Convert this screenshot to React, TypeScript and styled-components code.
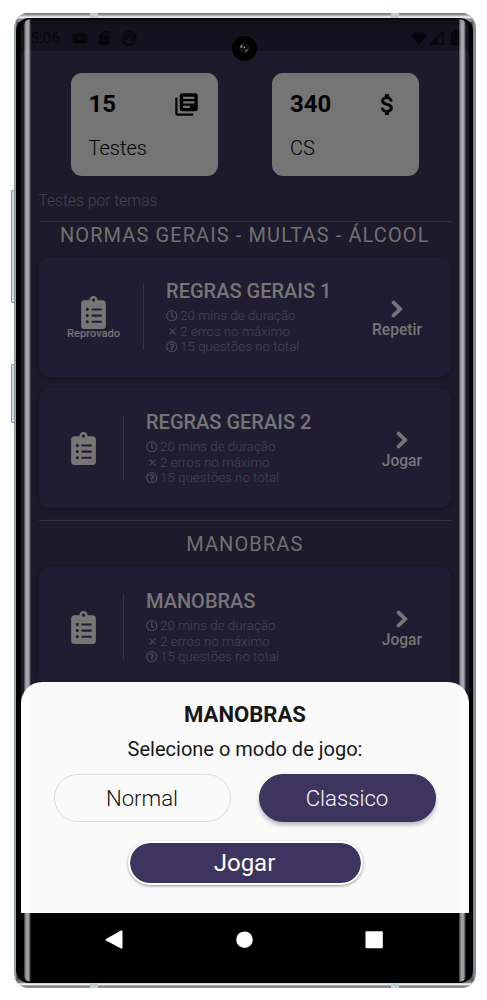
import React from "react";
import styled, { createGlobalStyle } from "styled-components";
import { FaClipboardList, FaRegClock, FaRegQuestionCircle, FaYoutube } from "react-icons/fa";
import { MdAttachMoney, MdClose, MdLibraryBooks, MdSdCard } from "react-icons/md";

const Global = createGlobalStyle`
  * { box-sizing: border-box; }
  body { margin: 0; background: #fff; font-family: Roboto, sans-serif; }
  svg { display: block; flex: none; }
`;

const Page = styled.main`
  width: 487px;
  height: 1000px;
  padding: 13px 0 0 14px;
  overflow: hidden;
`;

const Phone = styled.div`
  position: relative;
  width: 462px;
  height: 975px;
  padding: 6px 7px;
`;

const Frame = styled.div`
  position: absolute;
  inset: 0;
  border-radius: 15px;
  overflow: hidden;
  background: linear-gradient(90deg, #70777b 0, #a9b3b8 1px, #8e989d 2px, #3b4245 3px, #3b4245 458px, #6c717a 459px, #858a94 460px, #858a94 462px);
`;

const Metal = styled.div<{ $bottom?: boolean }>`
  position: absolute;
  left: 0;
  right: 0;
  ${(p) => (p.$bottom ? "bottom: 0" : "top: 0")};
  height: 9px;
  background: ${(p) =>
    p.$bottom
      ? "linear-gradient(#55565a, #88898c 44%, #efefef 52%, #eee 65%, #77797f 78%, #9c9da2)"
      : "linear-gradient(#6d7073, #9a9da2 22%, #d6d6dc 38%, #f4f4f6 53%, #8a8c90 66%)"};
`;

const Bezel = styled.div`
  position: absolute;
  inset: 5px 3px 5px 2px;
  border-radius: 13px;
  background: #000;
`;

const Antenna = styled.i<{ $x: number; $bottom?: boolean }>`
  position: absolute;
  left: ${(p) => p.$x}px;
  ${(p) => (p.$bottom ? "bottom: 0" : "top: 0")};
  width: 8px;
  height: 5px;
  background: #bdd1d5;
`;

const SideKey = styled.i<{ $y: number; $h: number }>`
  position: absolute;
  left: -3px;
  top: ${(p) => p.$y}px;
  width: 4px;
  height: ${(p) => p.$h}px;
  border-radius: 2px 0 0 2px;
  border: 1px solid #87959a;
  border-right: 0;
  background: #cfdadd;
`;

const Screen = styled.div`
  position: relative;
  display: flex;
  flex-direction: column;
  height: 963px;
  border-radius: 11px;
  overflow: hidden;
  background: #1d1a2b;
`;

const Glare = styled.i<{ $right?: boolean }>`
  position: absolute;
  top: 0;
  bottom: 0;
  ${(p) => (p.$right ? "right: 3px" : "left: 3px")};
  width: 7px;
  border-radius: ${(p) => (p.$right ? "0 6px 6px 0" : "6px 0 0 6px")};
  background: linear-gradient(90deg, #ffffff48 0 1px, #ffffff80 1px 2px, #ffffff9c 2px 5px, #ffffff68 5px 6px, #ffffff28 6px);
`;

const TopShade = styled.i`
  position: absolute;
  inset: 0 0 auto;
  height: 7px;
  background: linear-gradient(#0c0c0e, #12101a 60%, #15121f00);
`;

const Status = styled.div`
  display: flex;
  align-items: center;
  height: 32px;
  flex: none;
  padding: 5px 7px 0 9px;
  background: #15121f;
  color: #08070c;
  font-size: 15.5px;
`;
const StatusIcons = styled.div`
  display: flex;
  align-items: center;
  gap: 8.5px;
  margin-left: 12px;
`;
const StatusRight = styled.div`
  display: flex;
  align-items: center;
  gap: 1px;
  margin-left: auto;
`;

const Camera = styled.div`
  position: absolute;
  left: 211px;
  top: 17px;
  width: 25px;
  height: 25px;
  border-radius: 50%;
  background: #020202;
`;

const Content = styled.div`
  flex: 1;
  min-height: 0;
  overflow: hidden;
  padding: 22px 18px 0 17.5px;
`;

const Stats = styled.div`
  display: flex;
  justify-content: space-between;
  padding: 0 32px;
`;
const Stat = styled.div`
  width: 147px;
  height: 102.5px;
  padding: 17px 18px;
  border-radius: 11px;
  background: #757575;
  color: #020203;
`;
const StatTop = styled.div`
  display: flex;
  justify-content: space-between;
  align-items: center;
  height: 28px;
  font-size: 24px;
  font-weight: 700;
`;
const StatLabel = styled.div`
  margin-top: 16.5px;
  font-size: 20px;
  line-height: 26px;
  font-weight: 300;
`;
const Dollar = styled(MdAttachMoney)`
  path:not([fill="none"]) {
    stroke: currentColor;
    stroke-width: 0.5px;
  }
  path[fill="none"] {
    stroke: none;
  }
`;

const Caption = styled.div`
  margin-top: 15px;
  height: 30px;
  line-height: 20px;
  font-size: 15.6px;
  font-weight: 300;
  color: #454350;
`;
const Section = styled.h2<{ $h: number; $lift?: number }>`
  margin: 0;
  height: ${(p) => p.$h}px;
  padding-bottom: ${(p) => p.$lift ?? 0}px;
  border-top: 1px solid #34313f;
  display: flex;
  align-items: center;
  justify-content: center;
  white-space: nowrap;
  font-size: 20px;
  font-weight: 400;
  letter-spacing: 1.1px;
  color: #72716f;
`;
const Card = styled.div`
  display: flex;
  align-items: center;
  height: 120px;
  margin-bottom: 11.3px;
  padding: 0 29px 0 28.5px;
  border-radius: 11px;
  background: #201d33;
  box-shadow: 0 2px 4px #0b091966;
  color: #777674;
`;
const Badge = styled.div`
  display: flex;
  flex-direction: column;
  align-items: center;
  min-width: 33px;
  font-size: 11.1px;
  line-height: 11px;
  font-weight: 500;
  svg { margin-bottom: -1px; }
`;
const Divider = styled.i`
  width: 1px;
  height: 66px;
  margin: 0 22px 0 23px;
  background: #34314a;
`;
const Info = styled.div`
  flex: 1;
`;
const Name = styled.h3`
  margin: 0 0 5px;
  font-size: 20px;
  line-height: 23px;
  font-weight: 500;
  white-space: nowrap;
`;
const Detail = styled.div`
  display: flex;
  align-items: center;
  gap: 2px;
  height: 15.6px;
  font-size: 13.35px;
  font-weight: 300;
  color: #464455;
  white-space: nowrap;
`;
const DetailIcon = styled.span`
  width: 12px;
  display: flex;
  justify-content: center;
  color: #4e4c5a;
`;
const Action = styled.div`
  display: flex;
  flex-direction: column;
  align-items: center;
  gap: 3px;
  padding-top: 6px;
  font-size: 15.6px;
  line-height: 19px;
  font-weight: 500;
`;

const Sheet = styled.section`
  position: absolute;
  left: 0;
  right: 0;
  top: 663px;
  height: 231px;
  padding-top: 17.5px;
  display: flex;
  flex-direction: column;
  align-items: center;
  border-radius: 21px 21px 0 0;
  background: linear-gradient(90deg, #fff 0, #fff 8px, #fafafa 10px, #fafafa 438px, #fff 440px);
  color: #171717;
`;
const SheetTitle = styled.h1`
  margin: 0;
  font-size: 22.1px;
  line-height: 28px;
  font-weight: 700;
`;
const Prompt = styled.p`
  margin: 8.5px 0 0;
  font-size: 20px;
  line-height: 26px;
`;
const Modes = styled.div`
  display: flex;
  gap: 28px;
  margin-top: 11.5px;
`;
const Mode = styled.button<{ $active?: boolean }>`
  width: 177px;
  height: 48.5px;
  padding: 1px 1px 0 0;
  border: 1px solid ${(p) => (p.$active ? "#3d3560" : "#dcdcdc")};
  border-radius: 25px;
  background: ${(p) => (p.$active ? "#3d3560" : "#fafafa")};
  color: ${(p) => (p.$active ? "#f6f5fa" : "#111")};
  box-shadow: ${(p) => (p.$active ? "0 3px 4px #0004" : "none")};
  font: 300 22.2px Roboto, sans-serif;
`;
const Play = styled.button`
  width: 235px;
  height: 44.5px;
  margin-top: 18.5px;
  padding: 0 1px 0 0;
  border: 2.5px solid #fff;
  border-radius: 23px;
  background: #3d3560;
  background-clip: padding-box;
  color: #fff;
  box-shadow: 0 1px 3px #0006;
  font: 400 24px Roboto, sans-serif;
`;

const NavBar = styled.nav`
  display: flex;
  flex: none;
  justify-content: space-between;
  height: 69px;
  padding: 17px 86px 0 84px;
  background: #000;
`;

function TestCard({ title, result, action }: { title: string; result?: string; action: string }) {
  return (
    <Card>
      <Badge>
        <FaClipboardList size={33} />
        {result}
      </Badge>
      <Divider />
      <Info>
        <Name>{title}</Name>
        <Detail><DetailIcon><FaRegClock size={11.5} /></DetailIcon>20 mins de duração</Detail>
        <Detail><DetailIcon><MdClose size={11} /></DetailIcon>2 erros no máximo</Detail>
        <Detail><DetailIcon><FaRegQuestionCircle size={11.5} /></DetailIcon>15 questões no total</Detail>
      </Info>
      <Action>
        <svg width="12" height="18" viewBox="0 0 12 18" fill="none" stroke="currentColor" strokeWidth="3.8" strokeLinecap="round">
          <path d="M2.6 2.6 9.2 9l-6.6 6.4" />
        </svg>
        {action}
      </Action>
    </Card>
  );
}

export default function App() {
  return (
    <Page>
      <Global />
      <Phone>
        <SideKey $y={177} $h={113} />
        <SideKey $y={351} $h={59} />
        <Frame>
          <Metal />
          <Metal $bottom />
          <Antenna $x={76} />
          <Antenna $x={377} />
          <Antenna $x={76} $bottom />
          <Antenna $x={377} $bottom />
          <Bezel />
        </Frame>
        <Screen>
          <Status>
            5:06
            <StatusIcons>
              <FaYoutube size={16} />
              <MdSdCard size={16} />
              <svg width="16" height="16" viewBox="0 0 16 16" fill="none" stroke="currentColor">
                <path d="M13 13A7 7 0 1 1 15 8c0 2-1 3-2 4" strokeWidth="1.5" />
                <path d="M4.5 10.5a4.3 4.3 0 1 1 7 0M5 10l3-4 4 5" strokeWidth="1.6" />
              </svg>
            </StatusIcons>
            <StatusRight>
              <svg width="18" height="14" viewBox="0 0 18 14" fill="currentColor"><path d="M1 4Q9-2 17 4L9 14Z" /></svg>
              <svg width="15" height="14" viewBox="0 0 15 14"><path d="M1.5 13 14 1V13Z" fill="none" stroke="currentColor" strokeWidth="1.3" /><path d="M1 13 9 5.5V13Z" fill="currentColor" /></svg>
              <svg width="17" height="15" viewBox="0 0 17 15" fill="currentColor"><path d="M6 2h3V0h5v2h2v13H6Z" /></svg>
            </StatusRight>
          </Status>
          <Content>
            <Stats>
              <Stat>
                <StatTop>15<MdLibraryBooks size={27} /></StatTop>
                <StatLabel>Testes</StatLabel>
              </Stat>
              <Stat>
                <StatTop>340<Dollar size={27} /></StatTop>
                <StatLabel>CS</StatLabel>
              </Stat>
            </Stats>
            <Caption>Testes por temas</Caption>
            <Section $h={36.5} $lift={9}>NORMAS GERAIS - MULTAS - ÁLCOOL</Section>
            <TestCard title="REGRAS GERAIS 1" result="Reprovado" action="Repetir" />
            <TestCard title="REGRAS GERAIS 2" action="Jogar" />
            <Section $h={47.5}>MANOBRAS</Section>
            <TestCard title="MANOBRAS" action="Jogar" />
          </Content>
          <NavBar>
            <svg width="18" height="20" viewBox="0 0 18 20" fill="#fff"><path d="M1 9 16 .6Q17.5 0 17.5 1.5v16q0 1.5-1.5 1L1 10.5Q0 10 1 9Z" /></svg>
            <svg width="18" height="20" viewBox="0 0 18 20" fill="#fff"><circle cx="9.5" cy="9.7" r="8.3" /></svg>
            <svg width="18" height="20" viewBox="0 0 18 20" fill="#fff"><rect x=".5" y="1.2" width="17.3" height="17" rx="1" /></svg>
          </NavBar>
          <TopShade />
          <Glare />
          <Glare $right />
          <Camera>
            <svg width="25" height="25" viewBox="0 0 25 25">
              <circle cx="12.5" cy="12.5" r="5.5" fill="#101012" />
              <ellipse cx="9.5" cy="10.5" rx="1" ry="1.8" fill="#7e7e82" transform="rotate(30 9.5 10.5)" />
              <circle cx="12.5" cy="11.5" r=".7" fill="#bbb" />
              <ellipse cx="14.5" cy="14.5" rx="1.6" ry="1" fill="#67676c" transform="rotate(-35 14.5 14.5)" />
            </svg>
          </Camera>
          <Sheet>
            <SheetTitle>MANOBRAS</SheetTitle>
            <Prompt>Selecione o modo de jogo:</Prompt>
            <Modes>
              <Mode>Normal</Mode>
              <Mode $active>Classico</Mode>
            </Modes>
            <Play>Jogar</Play>
          </Sheet>
        </Screen>
      </Phone>
    </Page>
  );
}
